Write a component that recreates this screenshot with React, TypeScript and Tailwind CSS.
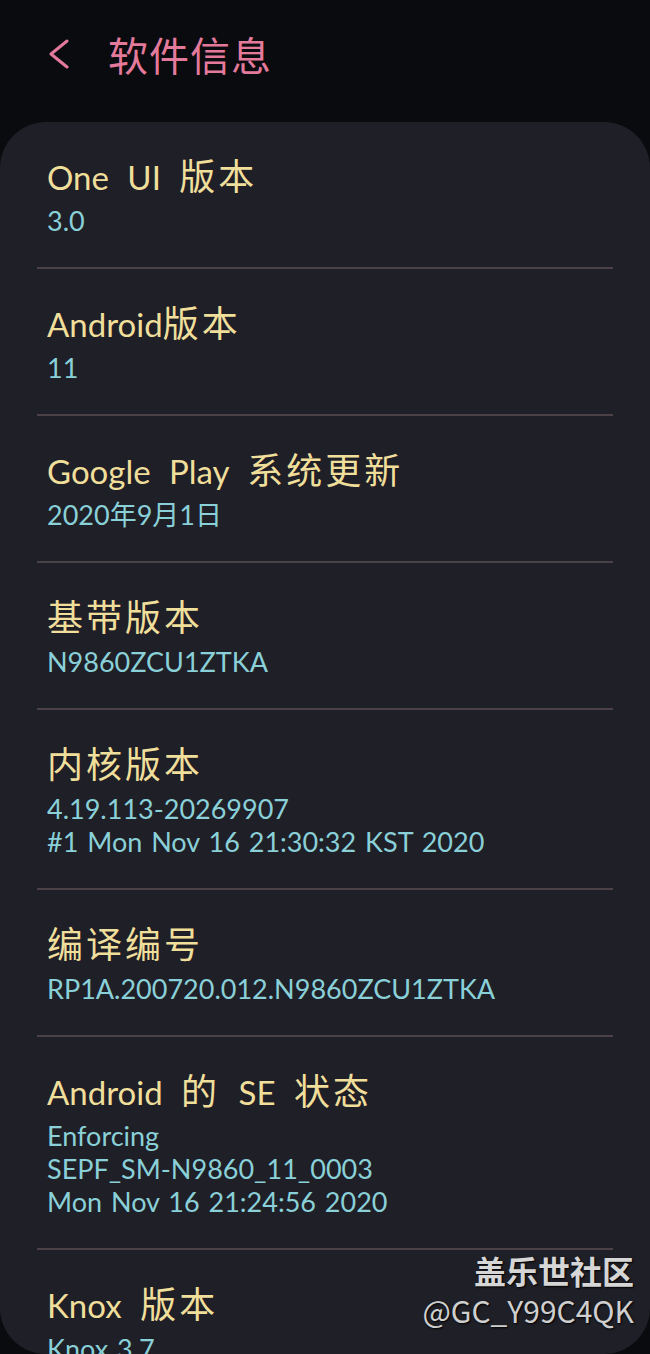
import React from 'react'

type Item = {
    title: string
    lines: string[]
}

const items: Item[] = [
    { title: 'One UI 版本', lines: ['3.0'] },
    { title: 'Android版本', lines: ['11'] },
    { title: 'Google Play 系统更新', lines: ['2020年9月1日'] },
    { title: '基带版本', lines: ['N9860ZCU1ZTKA'] },
    { title: '内核版本', lines: ['4.19.113-20269907', '#1 Mon Nov 16 21:30:32 KST 2020'] },
    { title: '编译编号', lines: ['RP1A.200720.012.N9860ZCU1ZTKA'] },
    { title: 'Android 的 SE 状态', lines: ['Enforcing', 'SEPF_SM-N9860_11_0003', 'Mon Nov 16 21:24:56 2020'] },
    { title: 'Knox 版本', lines: ['Knox 3.7'] },
]

const font = "font-['Lato','Noto_Sans_CJK_SC',sans-serif]"

// chinese runs are a bit wider than the latin ones in the original
function Title({ text }: { text: string }) {
    const parts = text.split(/([\u4e00-\u9fff]+)/).filter(Boolean)
    return (
        <p className="h-[44px] text-[33px] leading-[44px] text-[#f0de9b] [word-spacing:10px] whitespace-nowrap">
            {parts.map((part, i) =>
                /[\u4e00-\u9fff]/.test(part) ? (
                    <span key={i} className="text-[36px] leading-none tracking-[3px]">
                        {part}
                    </span>
                ) : (
                    <span key={i}>{part}</span>
                )
            )}
        </p>
    )
}

function InfoRow({ item, last }: { item: Item; last: boolean }) {
    return (
        <div>
            <div className="pl-[10px] pt-[33px] pb-[30px]">
                <Title text={item.title} />
                <div className="mt-[5px]">
                    {item.lines.map((line) => (
                        <p key={line} className="text-[27px] leading-[33px] text-[#8ad0d8] [word-spacing:2px]">
                            {line}
                        </p>
                    ))}
                </div>
            </div>
            {!last && <div className="h-[2px] bg-[#4a4247]" />}
        </div>
    )
}

export default function App() {
    return (
        <div className={`relative h-[1354px] w-[650px] overflow-hidden bg-[#0a0b0f] flex flex-col ${font}`}>
            {/* header */}
            <div className="h-[122px] flex items-center shrink-0 pb-[14px]">
                <svg className="ml-[46px]" width="24" height="30" viewBox="0 0 24 30" fill="none">
                    <path d="M21 2 L5 15 L21 28" stroke="#e37a9c" strokeWidth="3" strokeLinecap="round" strokeLinejoin="round" />
                </svg>
                <h1 className="ml-[38px] text-[40px] leading-none text-[#e37a9c] tracking-[1px] font-['Noto_Sans_CJK_SC',sans-serif]">
                    软件信息
                </h1>
            </div>

            {/* card */}
            <div className="flex-1 overflow-hidden rounded-[46px] bg-[#1f1f27] px-[37px]">
                {items.map((item, i) => (
                    <InfoRow key={item.title} item={item} last={i === items.length - 1} />
                ))}
            </div>

            {/* watermark */}
            <div className="absolute right-[16px] top-[1250px] flex flex-col items-end font-['Noto_Sans_CJK_SC',sans-serif] [text-shadow:1px_1px_2px_#000]">
                <span className="text-[32px] font-bold leading-[40px] text-[#d6d6d6]">盖乐世社区</span>
                <span className="text-[30px] leading-[40px] text-[#cfcfcf]">@GC_Y99C4QK</span>
            </div>
        </div>
    )
}
